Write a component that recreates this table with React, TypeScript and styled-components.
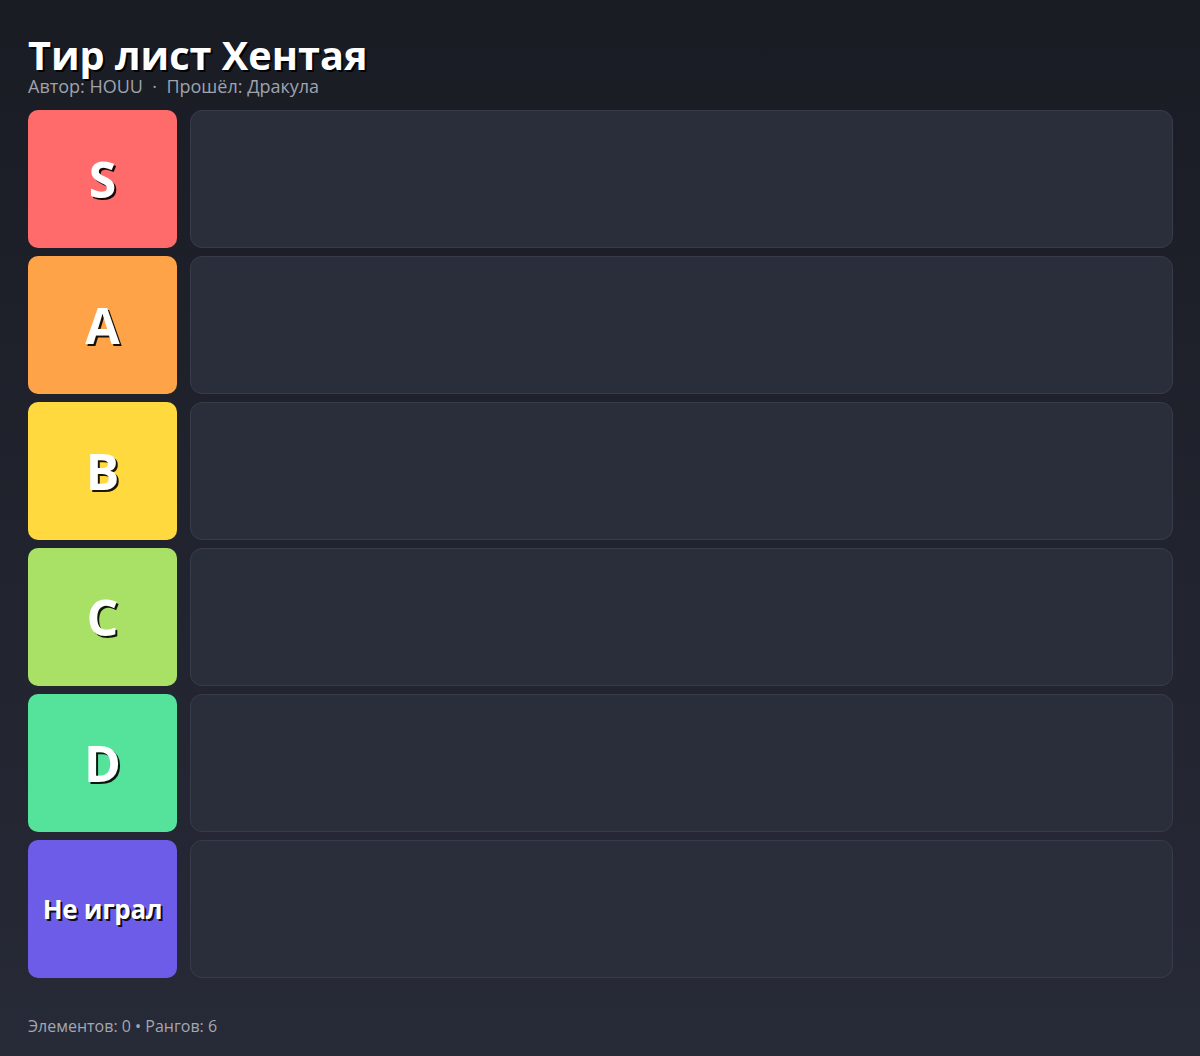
import React from "react";
import styled, { createGlobalStyle } from "styled-components";

const Global = createGlobalStyle`
  html, body { margin: 0; padding: 0; }
  body {
    min-height: 1056px;
    background: linear-gradient(180deg, #1a1c24 0%, #272a37 100%);
    font-family: "Open Sans", "Noto Sans", sans-serif;
    color: #fff;
  }
`;

const Page = styled.div`
  padding: 35px 28px 0 28px;
  min-height: 1056px;
  box-sizing: border-box;
  display: flex;
  flex-direction: column;
`;

const Title = styled.h1`
  margin: 0;
  font-size: 39.7px;
  line-height: 40px;
  font-weight: 700;
  color: #ffffff;
  text-shadow: 2px 2px 0 rgba(0, 0, 0, 0.85);
`;

const Subtitle = styled.div`
  font-size: 18px;
  line-height: 20px;
  color: #9ea3ae;
  margin-top: 1px;
  white-space: pre;
`;

const Tiers = styled.div`
  display: flex;
  flex-direction: column;
  gap: 8px;
  margin-top: 14px;
  width: 1145px;
`;

const Row = styled.div`
  display: grid;
  grid-template-columns: 149px 1fr;
  gap: 13px;
  height: 138px;
`;

const Label = styled.div<{ $bg: string; $small?: boolean }>`
  background: ${(p) => p.$bg};
  border-radius: 10px;
  display: flex;
  align-items: center;
  justify-content: center;
  font-weight: 700;
  font-size: ${(p) => (p.$small ? "26px" : "50px")};
  letter-spacing: ${(p) => (p.$small ? "-0.3px" : "0")};
  color: #fff;
  text-shadow: 2px 2px 0 rgba(0, 0, 0, 0.9);
`;

const Zone = styled.div`
  background: #2a2d3a;
  border: 1px solid #383c4a;
  border-radius: 12px;
`;

const Footer = styled.div`
  margin-top: 37px;
  font-size: 16px;
  color: #a3a7b2;
`;

const tiers = [
  { name: "S", color: "#ff6b6b" },
  { name: "A", color: "#ffa348" },
  { name: "B", color: "#ffd93d" },
  { name: "C", color: "#a9e166" },
  { name: "D", color: "#55e39c" },
  { name: "Не играл", color: "#6c5ce7", small: true },
];

export default function App() {
  return (
    <>
      <Global />
      <Page>
        <Title>Тир лист Хентая</Title>
        <Subtitle>{"Автор: HOUU  ·  Прошёл: Дракула"}</Subtitle>
        <Tiers>
          {tiers.map((t) => (
            <Row key={t.name}>
              <Label $bg={t.color} $small={t.small}>
                {t.name}
              </Label>
              <Zone />
            </Row>
          ))}
        </Tiers>
        <Footer>Элементов: 0 • Рангов: 6</Footer>
      </Page>
    </>
  );
}
